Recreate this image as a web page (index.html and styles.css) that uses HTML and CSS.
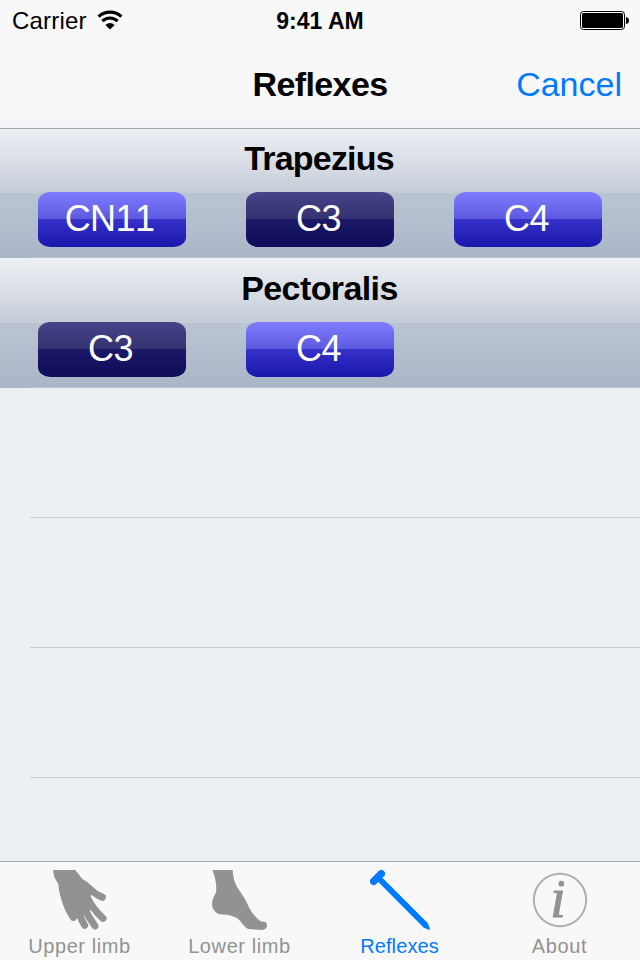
FILE: index.html
```html
<!DOCTYPE html>
<html lang="en">
<head>
    <meta charset="UTF-8">
    <meta name="viewport" content="width=device-width, initial-scale=1.0">
    <title>Reflexes</title>
    <link rel="stylesheet" href="styles.css">
</head>
<body>
    <header class="header">
        <div class="status">
            <div class="carrier">
                <span>Carrier</span>
                <svg class="wifi" width="26" height="20" viewBox="0 0 26 20">
                    <path d="M1.6 6.6 A16.5 16.5 0 0 1 24.4 6.6" fill="none" stroke="#000" stroke-width="3.2"/>
                    <path d="M5.4 11.2 A10.6 10.6 0 0 1 20.6 11.2" fill="none" stroke="#000" stroke-width="3.2"/>
                    <path d="M13 19.5 L8.4 14.9 Q13 11 17.6 14.9 Z"/>
                </svg>
            </div>
            <div class="clock">9:41 AM</div>
            <div class="power">
                <svg width="50" height="20" viewBox="0 0 50 20">
                    <rect x=".5" y=".5" width="44" height="18" rx="3" fill="#fff" stroke="#000"/>
                    <rect x="2" y="2" width="41" height="15" rx="1.5"/>
                    <path d="M46 6 Q49 6.5 49 9.5 Q49 12.5 46 13 Z"/>
                </svg>
            </div>
        </div>
        <nav class="navbar">
            <h1 class="title">Reflexes</h1>
            <a class="cancel">Cancel</a>
        </nav>
    </header>

    <main class="list">
        <section class="row muscle">
            <h2 class="name trapezius">Trapezius</h2>
            <div class="roots">
                <button class="root cranial">CN11</button>
                <button class="root dark">C3</button>
                <button class="root">C4</button>
            </div>
        </section>
        <section class="row muscle">
            <h2 class="name">Pectoralis</h2>
            <div class="roots">
                <button class="root dark">C3</button>
                <button class="root">C4</button>
            </div>
        </section>
        <div class="row"></div>
        <div class="row"></div>
        <div class="row"></div>
        <div class="row"></div>
    </main>

    <footer class="tabbar">
        <div class="tab">
            <svg width="60" height="60" viewBox="90 45 180 180" fill="#929292">
                <path d="M99 45 H166 L187 72 Q202 80 214 92 L230 107 L211 123 L214 150 L210 170 L187 182 L169 188 L150 190 Q130 157 122 127 Q116 106 115 88 Q108 75 104 68 Q100 56 99 45 Z"/>
                <g fill="none" stroke="#929292" stroke-width="21" stroke-linecap="round">
                    <path d="M205 98 Q226 118 247 127"/>
                    <path d="M203 130 Q220 164 249 190"/>
                    <path d="M188 150 Q204 185 225 213"/>
                    <path d="M173 155 Q180 190 194 211"/>
                    <path d="M135 130 Q144 165 160 187"/>
                </g>
            </svg>
            <span class="label">Upper limb</span>
        </div>
        <div class="tab">
            <svg width="60" height="60" viewBox="90 45 180 180" fill="#929292">
                <path d="M97 45 H158 Q159 74 171 96 Q186 118 198 137 Q205 155 217 174 Q231 191 242 199 Q248 201 256 201 Q263 206 260 216 Q257 224 246 225 L204 222 Q196 218 187 206 Q179 196 172 190 Q160 182 139 179 L119 178 Q105 173 98 158 Q93 142 101 126 Q109 115 109 105 Q109 72 97 45 Z"/>
            </svg>
            <span class="label">Lower limb</span>
        </div>
        <div class="tab active">
            <svg width="60" height="60" viewBox="90 45 180 180" fill="#007aff">
                <path d="M101 79 L124 56" fill="none" stroke="#007aff" stroke-width="22" stroke-linecap="round"/>
                <path d="M112 78 L124 65 L263 204 Q269 214 270 225 Q260 223 250 217 Z"/>
            </svg>
            <span class="label reflexes">Reflexes</span>
        </div>
        <div class="tab">
            <svg class="about" width="60" height="60" viewBox="90 45 180 180" fill="#929292">
                <circle cx="180" cy="135" r="78.5" fill="none" stroke="#b0b0b0" stroke-width="6"/>
                <circle cx="184" cy="86" r="8.5"/>
                <text class="info" x="151" y="187">ı</text>
            </svg>
            <span class="label">About</span>
        </div>
    </footer>
</body>
</html>
```
FILE: styles.css
```css
body {
    font-family: "Liberation Sans", Arial, sans-serif;
    display: flex;
    flex-direction: column;
    width: 640px;
    height: 960px;
    margin: 0;
    overflow: hidden;
    background-color: #ecf0f3;
    color: #000;
}
.header {
    flex: none;
    height: 128px;
    background: linear-gradient(#f8f8f8 65%, #f4f5f8);
    border-bottom: 1px solid #a5a6ac;
}
.status {
    display: grid;
    grid-template-columns: 1fr auto 1fr;
    align-items: center;
    height: 42px;
    padding: 0 10px 0 12px;
    font-size: 24px;
}
.carrier {
    display: flex;
    align-items: center;
    gap: 10px;
    letter-spacing: 0.2px;
}
.wifi {
    margin-bottom: 2px;
}
.clock {
    padding-right: 2px;
    font-weight: bold;
    font-size: 23px;
}
.power {
    display: flex;
    justify-content: flex-end;
}
.navbar {
    display: grid;
    grid-template-columns: 1fr auto 1fr;
    align-items: center;
    height: 84px;
    padding: 0 18px;
    font-size: 34px;
}
.title {
    grid-column: 2;
    margin: 0;
    font-size: 34px;
    letter-spacing: -0.6px;
}
.cancel {
    justify-self: end;
    color: #007aff;
}
.list {
    flex: 1;
    min-height: 0;
    overflow: hidden;
}
.row {
    height: 130px;
    box-sizing: border-box;
    background: linear-gradient(#c8ccd1, #c8ccd1) 30px 100% / 100% 1px no-repeat;
}
.row:first-child {
    height: 129px;
}
.muscle {
    display: flex;
    flex-direction: column;
    justify-content: flex-end;
    padding-bottom: 11px;
    background:
        linear-gradient(#bdc3cd, #bdc3cd) 30px 100% / 100% 1px no-repeat,
        linear-gradient(#edf0f4, #c5ccd8 50%, #bac4d1 50%, #aab5c8);
}
.name {
    margin: 0 1px 14px 0;
    font-size: 34px;
    line-height: 40px;
    text-align: center;
    letter-spacing: -0.6px;
}
.trapezius {
    margin-right: 2px;
    letter-spacing: -0.8px;
}
.roots {
    display: grid;
    grid-template-columns: repeat(3, 148px);
    column-gap: 60px;
    padding-left: 38px;
}
.root {
    height: 55px;
    padding: 0 3px 2px 0;
    border: none;
    border-radius: 12px / 10px;
    background: linear-gradient(#7f7cfe, #5e5ae0 49%, #3632ca 49%, #1916ab);
    color: #fff;
    font-family: inherit;
    font-size: 36px;
    letter-spacing: -0.6px;
}
.cranial {
    padding-right: 5px;
    font-kerning: none;
}
.root.dark {
    background: linear-gradient(#46448a, #34326f 49%, #1b1968 49%, #0f0d59);
}
.tabbar {
    flex: none;
    display: grid;
    grid-template-columns: repeat(4, 1fr);
    height: 98px;
    border-top: 1px solid #a9aaae;
    background-color: #f8f8f8;
}
.tab {
    display: flex;
    flex-direction: column;
    align-items: center;
    padding-top: 8px;
    color: #929292;
}
.label {
    margin: 4px 1px 0 0;
    font-size: 20px;
    line-height: 24px;
    letter-spacing: 0.6px;
}
.reflexes {
    letter-spacing: 0.1px;
}
.active {
    color: #007aff;
}
.about {
    overflow: visible;
}
.info {
    font-family: "Liberation Serif", serif;
    font-style: italic;
    font-size: 170px;
    stroke: #929292;
    stroke-width: 3px;
}
```
